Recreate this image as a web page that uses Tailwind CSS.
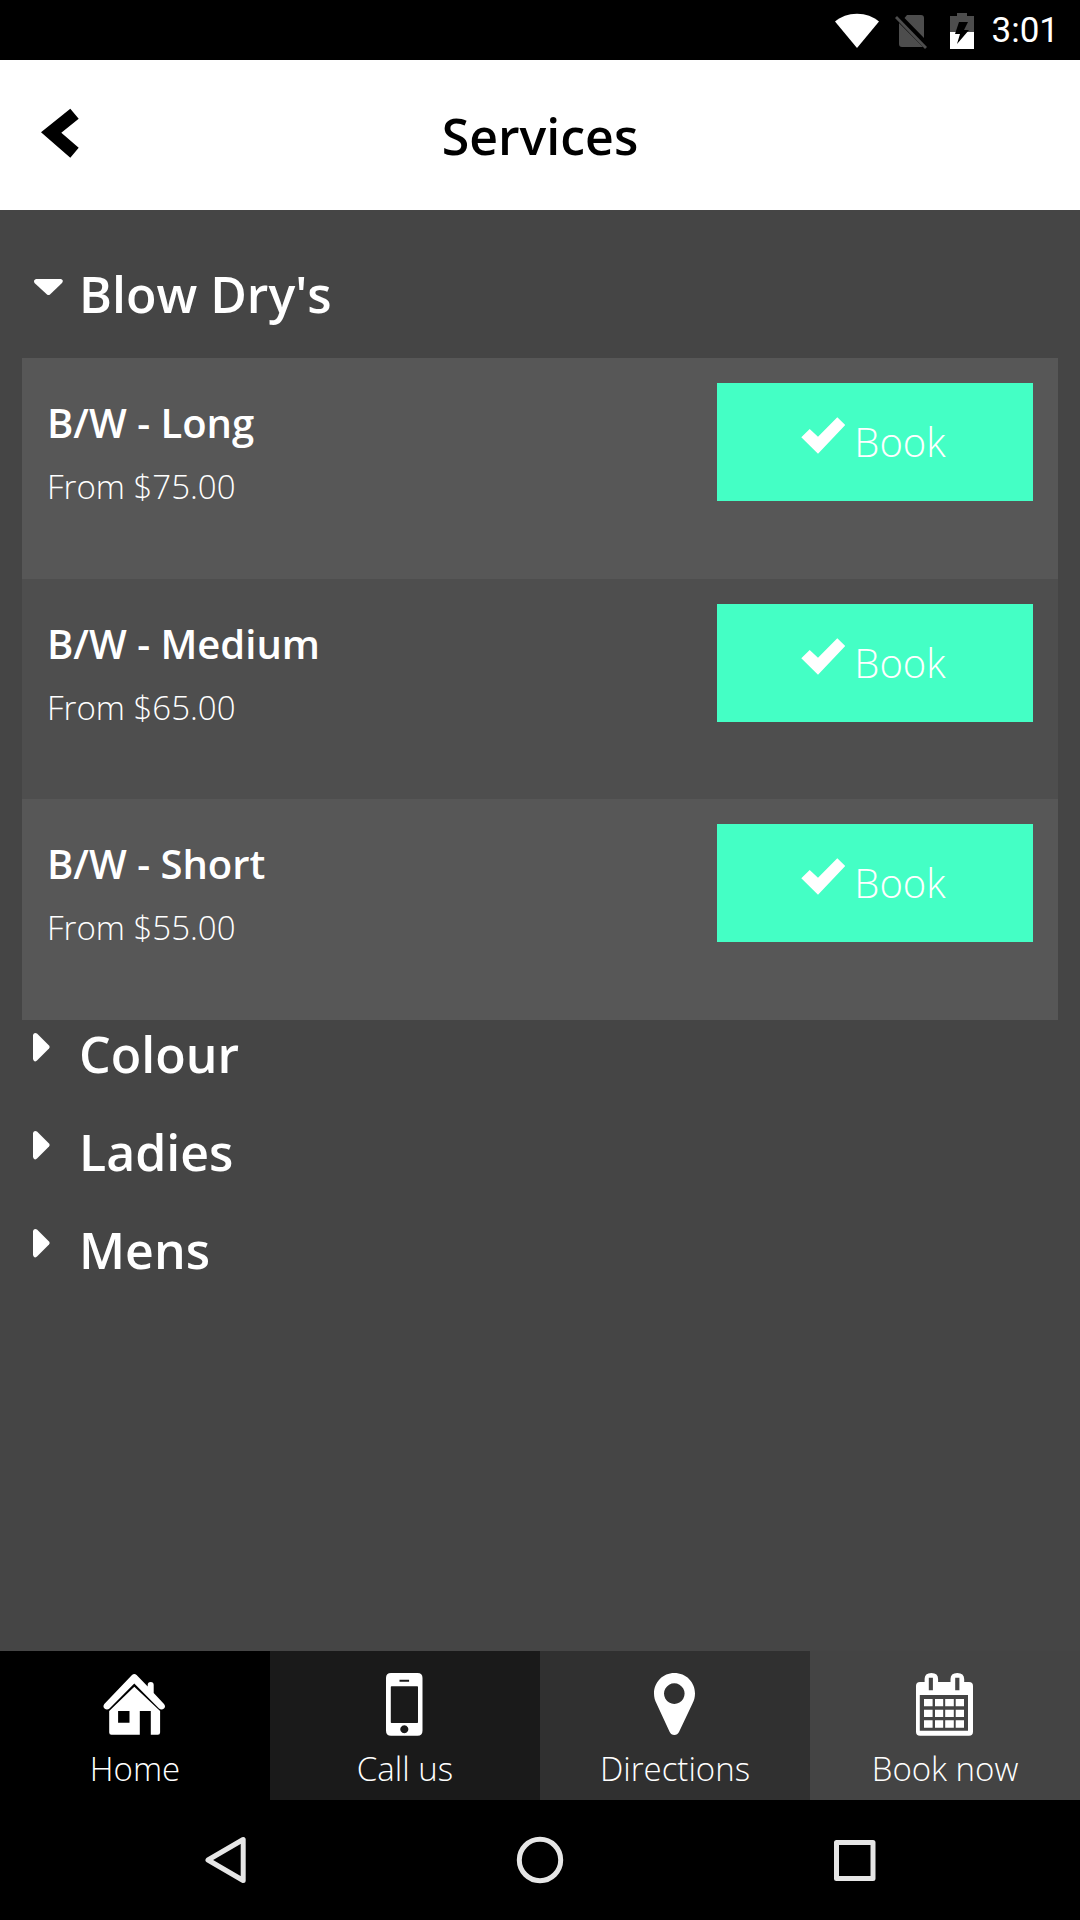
<!DOCTYPE html>
<html lang="en">
<head>
<meta charset="utf-8">
<meta name="viewport" content="width=device-width, initial-scale=1">
<title>Services</title>
<script src="https://cdn.jsdelivr.net/npm/@tailwindcss/browser@4"></script>
</head>
<body class="flex min-h-screen flex-col bg-[#454545] font-['Open_Sans',sans-serif] text-white">

  <!-- Status bar -->
  <div class="flex h-[60px] items-center justify-end bg-black pt-px pr-[21px]">
    <svg class="mr-4 h-9 w-11" viewBox="0 0 44 36" fill="#fff" aria-label="Wi-Fi"><path d="M0 8.500C6 3.500 13 .7 22 .7s16 2.800 22 7.800L22 35z"/></svg>
    <svg class="mr-[23px] h-9 w-8" viewBox="0 0 32 36" fill="#4d4d4d" aria-label="No SIM"><path d="M12 2h14q3 0 3 3v20L9.500 5zM4 10l24 24H7q-3 0-3-3z"/><path d="M0 5l2-2 30 31-2 2z"/></svg>
    <svg class="mr-[18px] h-9 w-6" viewBox="0 0 24 36" aria-label="Battery charging"><path fill="#4d4d4d" d="M0 3h7V0h10v3h7v16H0z"/><path fill="#fff" d="M0 19h24v17H0z"/><path d="M9 9h9l-4 8h5L7 31l3-10H5z"/></svg>
    <time class="font-[Roboto,sans-serif] text-[35px] leading-none">3:01</time>
  </div>

  <!-- Title bar -->
  <header class="grid h-[150px] grid-cols-[1fr_auto_1fr] items-center bg-white text-black">
    <button class="ml-[41px] w-[38px] pb-1" aria-label="Back">
      <svg class="h-[50px] w-[38px]" viewBox="0 0 38 50"><path d="M29.300.7 37.700 10.700 20.300 24.700 37.700 39.700 29.300 49.700 0 24.300z"/></svg>
    </button>
    <h1 class="pt-px text-[50px] leading-[68px] font-semibold">Services</h1>
  </header>

  <main class="flex-1 pt-[50px]">
    <section>
      <h2>
        <button class="flex h-[98px] w-full items-start gap-[15px] pl-8 text-left text-[50px] leading-[68px] font-semibold" aria-expanded="true">
          <svg class="mt-[11px] size-8" viewBox="0 0 32 32" fill="#fff"><path d="M4 8h25q3 1 1 4L18 23.500q-1.500 1-3 0L2.500 12Q1 9 4 8z"/></svg>
          <span>Blow Dry's</span>
        </button>
      </h2>
      <ul class="mx-[22px]">
        <li class="flex h-[221px] items-start justify-between bg-[#575757] px-[25px] pt-[25px]">
          <div class="pt-3">
            <h3 class="text-[40px] leading-[56px] font-semibold">B/W - Long</h3>
            <p class="pt-[13px] text-[33px] leading-[46px] font-light">From $75.00</p>
          </div>
          <button class="flex h-[118px] w-[316px] items-start justify-center gap-[9px] bg-[#44ffc5] pt-8 pr-[3px] text-[40px] leading-[54px] font-light">
            <svg class="mt-[2px] h-[37px] w-11" viewBox="0 0 44 37" fill="#fff"><path d="M.3 20.300 8.700 12l8.300 7.700L36.300.3l8 7.700L17 36.700z"/></svg>Book
          </button>
        </li>
        <li class="flex h-[220px] items-start justify-between bg-[#4e4e4e] px-[25px] pt-[25px]">
          <div class="pt-3">
            <h3 class="text-[40px] leading-[56px] font-semibold">B/W - Medium</h3>
            <p class="pt-[13px] text-[33px] leading-[46px] font-light">From $65.00</p>
          </div>
          <button class="flex h-[118px] w-[316px] items-start justify-center gap-[9px] bg-[#44ffc5] pt-8 pr-[3px] text-[40px] leading-[54px] font-light">
            <svg class="mt-[2px] h-[37px] w-11" viewBox="0 0 44 37" fill="#fff"><path d="M.3 20.300 8.700 12l8.300 7.700L36.300.3l8 7.700L17 36.700z"/></svg>Book
          </button>
        </li>
        <li class="flex h-[221px] items-start justify-between bg-[#575757] px-[25px] pt-[25px]">
          <div class="pt-3">
            <h3 class="text-[40px] leading-[56px] font-semibold">B/W - Short</h3>
            <p class="pt-[13px] text-[33px] leading-[46px] font-light">From $55.00</p>
          </div>
          <button class="flex h-[118px] w-[316px] items-start justify-center gap-[9px] bg-[#44ffc5] pt-8 pr-[3px] text-[40px] leading-[54px] font-light">
            <svg class="mt-[2px] h-[37px] w-11" viewBox="0 0 44 37" fill="#fff"><path d="M.3 20.300 8.700 12l8.300 7.700L36.300.3l8 7.700L17 36.700z"/></svg>Book
          </button>
        </li>
      </ul>
    </section>
    <h2>
      <button class="flex h-[98px] w-full items-start gap-[15px] pl-8 text-left text-[50px] leading-[68px] font-semibold" aria-expanded="false">
        <svg class="mt-[11px] size-8" viewBox="0 0 32 32" fill="#fff"><path d="M1 4q1-3 4-1.500L17 14.500q1.500 1.500 0 3L5 29.500Q2 32 1 28z"/></svg>
        <span>Colour</span>
      </button>
    </h2>
    <h2>
      <button class="flex h-[98px] w-full items-start gap-[15px] pl-8 text-left text-[50px] leading-[68px] font-semibold" aria-expanded="false">
        <svg class="mt-[11px] size-8" viewBox="0 0 32 32" fill="#fff"><path d="M1 4q1-3 4-1.500L17 14.500q1.500 1.500 0 3L5 29.500Q2 32 1 28z"/></svg>
        <span>Ladies</span>
      </button>
    </h2>
    <h2>
      <button class="flex h-[98px] w-full items-start gap-[15px] pl-8 text-left text-[50px] leading-[68px] font-semibold" aria-expanded="false">
        <svg class="mt-[11px] size-8" viewBox="0 0 32 32" fill="#fff"><path d="M1 4q1-3 4-1.500L17 14.500q1.500 1.500 0 3L5 29.500Q2 32 1 28z"/></svg>
        <span>Mens</span>
      </button>
    </h2>
  </main>

  <!-- App tabs -->
  <nav class="grid h-[149px] grid-cols-4 text-[33px] leading-[46px] font-light">
    <a href="#home" class="flex flex-col items-center gap-[10px] bg-black pt-[21px]">
      <svg class="size-16" viewBox="0 0 64 64" fill="#fff"><path d="M29 3q2.300-2 4.600 0L44.700 14.500V13q0-3 3-3t3 3v8L61 32q2 2.500 0 4.500-2.500 1.800-5 0L31.300 11.500 6.500 36.500q-2.500 2-5 0-2-2-.2-4.500z"/><path fill-rule="evenodd" d="M31.300 14.700 57.100 39v21.500q0 2.200-2.200 2.200h-7.100V39h-11v23.700H8.400q-2.200 0-2.200-2.200V39zM15.100 39v11.700h11.400V39z"/></svg>
      <span>Home</span>
    </a>
    <a href="#call" class="flex flex-col items-center gap-[10px] bg-[#1a1a1a] pt-[21px]">
      <svg class="size-16" viewBox="0 0 64 64" fill="#fff"><path fill-rule="evenodd" d="M18 1h26.500q5 0 5 5v52.700q0 5-5 5H18q-5 0-5-5V6q0-5 5-5zM18.500 14.300q-.7 0-.7.7v35.300q0 .7.700.7h25.800q.7 0 .7-.7V15q0-.7-.7-.7zM26.500 7.700v2h9.600v-2zM31.300 53.300a4 4 0 1 0 .01 0z"/></svg>
      <span>Call us</span>
    </a>
    <a href="#directions" class="flex flex-col items-center gap-[10px] bg-[#303030] pt-[21px]">
      <svg class="size-16" viewBox="0 0 64 64" fill="#fff"><path fill-rule="evenodd" d="M31.300 1C43 1 52 10 52 21.500c0 4-1 7-2.500 10L36 60q-1.500 3-4.700 3t-4.600-3L13.500 31.500C12 28.500 11 25.500 11 21.500 11 10 20 1 31.300 1zm0 10.300a10.300 10.300 0 1 0 .01 0z"/></svg>
      <span>Directions</span>
    </a>
    <a href="#book" class="flex flex-col items-center gap-[10px] bg-[#444444] pt-[21px]">
      <svg class="size-16" viewBox="0 0 64 64" fill="#fff"><path fill-rule="evenodd" d="M11.600 10V7q0-6 6.800-6t6.700 6v3h12.400V7q0-6 6.800-6t6.900 6v3H56q4 0 4 4v45.700q0 4-4 4H7q-4 0-4-4V14q0-4 4-4zM15.800 5.700v12.600h4.100V5.700zM42.200 5.700v12.600h4.200V5.700zM6.800 23v35.700H55V23z"/><path d="M11 27h8.600v7.300H11zM22 27h8.200v7.300H22zM32.200 27h8.600v7.300h-8.600zM42.700 27H51v7.300h-8.300zM11 37.700h8.600V45H11zM22 37.700h8.200V45H22zM32.200 37.700h8.600V45h-8.600zM42.700 37.700H51V45h-8.300zM11 48.300h8.600v7.400H11zM22 48.300h8.200v7.400H22zM32.200 48.300h8.600v7.400h-8.600zM42.700 48.300H51v7.400h-8.300z"/></svg>
      <span>Book now</span>
    </a>
  </nav>

  <!-- System navigation -->
  <div class="flex h-[120px] items-center bg-black px-[68px]">
    <button class="flex flex-1 justify-center" aria-label="System back"><svg class="size-12" viewBox="0 0 48 48" fill="none" stroke="#e6e6e6" stroke-width="5" stroke-linejoin="round"><path d="M42.200 3.500v41L7 24z"/></svg></button>
    <button class="flex flex-1 justify-center" aria-label="System home"><svg class="size-12" viewBox="0 0 48 48" fill="none" stroke="#e6e6e6" stroke-width="5"><circle cx="24" cy="24" r="20.700"/></svg></button>
    <button class="flex flex-1 justify-center" aria-label="Recent apps"><svg class="size-12" viewBox="0 0 48 48" fill="none" stroke="#e6e6e6" stroke-width="5" stroke-linejoin="round"><path d="M5.500 6.500h36.500v36H5.500z"/></svg></button>
  </div>
</body>
</html>
